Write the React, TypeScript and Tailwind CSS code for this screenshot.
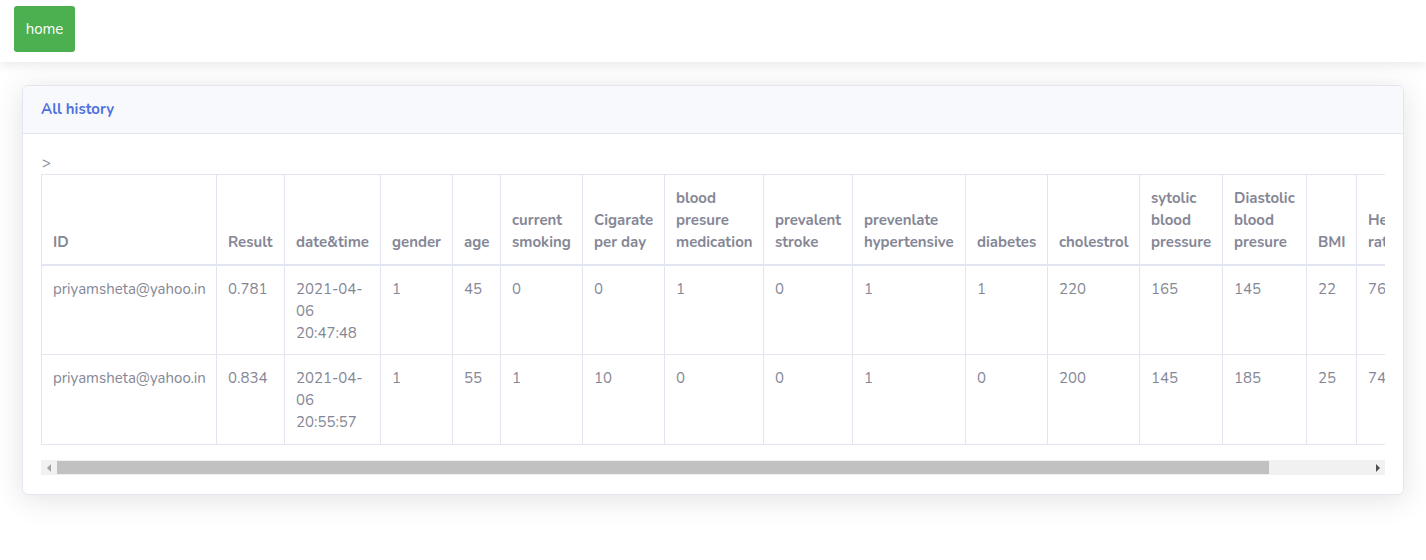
import React from "react";

const columns = [
  { label: "ID", w: "w-[175px]" },
  { label: "Result", w: "w-[68px]" },
  { label: "date&time", w: "w-[96px]" },
  { label: "gender", w: "w-[72px]" },
  { label: "age", w: "w-[48px]" },
  { label: "current smoking", w: "w-[82px]" },
  { label: "Cigarate per day", w: "w-[82px]" },
  { label: "blood presure medication", w: "w-[99px]" },
  { label: "prevalent stroke", w: "w-[89px]" },
  { label: "prevenlate hypertensive", w: "w-[113px]" },
  { label: "diabetes", w: "w-[82px]" },
  { label: "cholestrol", w: "w-[92px]" },
  { label: "sytolic blood pressure", w: "w-[83px]" },
  { label: "Diastolic blood presure", w: "w-[84px]" },
  { label: "BMI", w: "w-[50px]" },
  { label: "Heart rate", w: "w-[66px]" },
  { label: "glucose", w: "w-[80px]" },
];

const rows = [
  ["priyamsheta@yahoo.in", "0.781", "2021-04-06 20:47:48", "1", "45", "0", "0", "1", "0", "1", "1", "220", "165", "145", "22", "76", "85"],
  ["priyamsheta@yahoo.in", "0.834", "2021-04-06 20:55:57", "1", "55", "1", "10", "0", "0", "1", "0", "200", "145", "185", "25", "74", "90"],
];

export default function App() {
  return (
    <div className="min-h-[560px] bg-white text-[15px] leading-[22px] text-[#858796] font-['Nunito','Lato','Noto_Sans',sans-serif]">
      {/* top bar */}
      <div className="h-[62px] bg-white px-[14px] pt-[6px] shadow-[0_4px_10px_rgba(0,0,0,0.08)] relative z-10">
        <button className="h-[46px] w-[61px] rounded-[3px] bg-[#4caf50] text-white text-[15px]">home</button>
      </div>

      <div className="mx-[22px] mt-[23px] rounded-[6px] border border-[#e3e6f0] bg-white shadow-[0_4px_28px_rgba(58,59,69,0.15)]">
        <div className="h-[48px] flex items-center pb-[2px] px-[18px] bg-[#f8f9fc] border-b border-[#e3e6f0] rounded-t-[6px]">
          <h6 className="font-bold text-[#4e73df] text-[15px]">All history</h6>
        </div>

        <div className="px-[18px] pt-[18px] pb-[19px]">
          <div className="pl-[1px]">&gt;</div>
          <div className="overflow-hidden">
            <table className="table-fixed border-collapse border border-[#e3e6f0] w-[1459px]">
              <colgroup>
                {columns.map((c) => (
                  <col key={c.label} className={c.w} />
                ))}
              </colgroup>
              <thead>
                <tr>
                  {columns.map((c) => (
                    <th
                      key={c.label}
                      className="align-bottom text-left font-bold px-[11px] py-[11px] border border-[#e3e6f0] border-b-2 h-[90px]"
                    >
                      {c.label}
                    </th>
                  ))}
                </tr>
              </thead>
              <tbody>
                {rows.map((r, i) => (
                  <tr key={i}>
                    {r.map((v, j) => (
                      <td key={j} className="align-top px-[11px] pt-[12px] pb-[10px] border border-[#e3e6f0] h-[90px]">
                        {v}
                      </td>
                    ))}
                  </tr>
                ))}
              </tbody>
            </table>
          </div>

          {/* horizontal scrollbar */}
          <div className="mt-[15px] h-[15px] bg-[#f1f1f1] flex items-center">
            <div className="w-[15px] flex justify-center">
              <span className="w-0 h-0 border-y-[4px] border-y-transparent border-r-[4px] border-r-[#a3a3a3]" />
            </div>
            <div className="flex-1 h-full py-[1px] pl-[1px]">
              <div className="h-full w-[92.3%] bg-[#c1c1c1]" />
            </div>
            <div className="w-[15px] flex justify-center">
              <span className="w-0 h-0 border-y-[4px] border-y-transparent border-l-[4px] border-l-[#505050]" />
            </div>
          </div>
        </div>
      </div>
    </div>
  );
}
